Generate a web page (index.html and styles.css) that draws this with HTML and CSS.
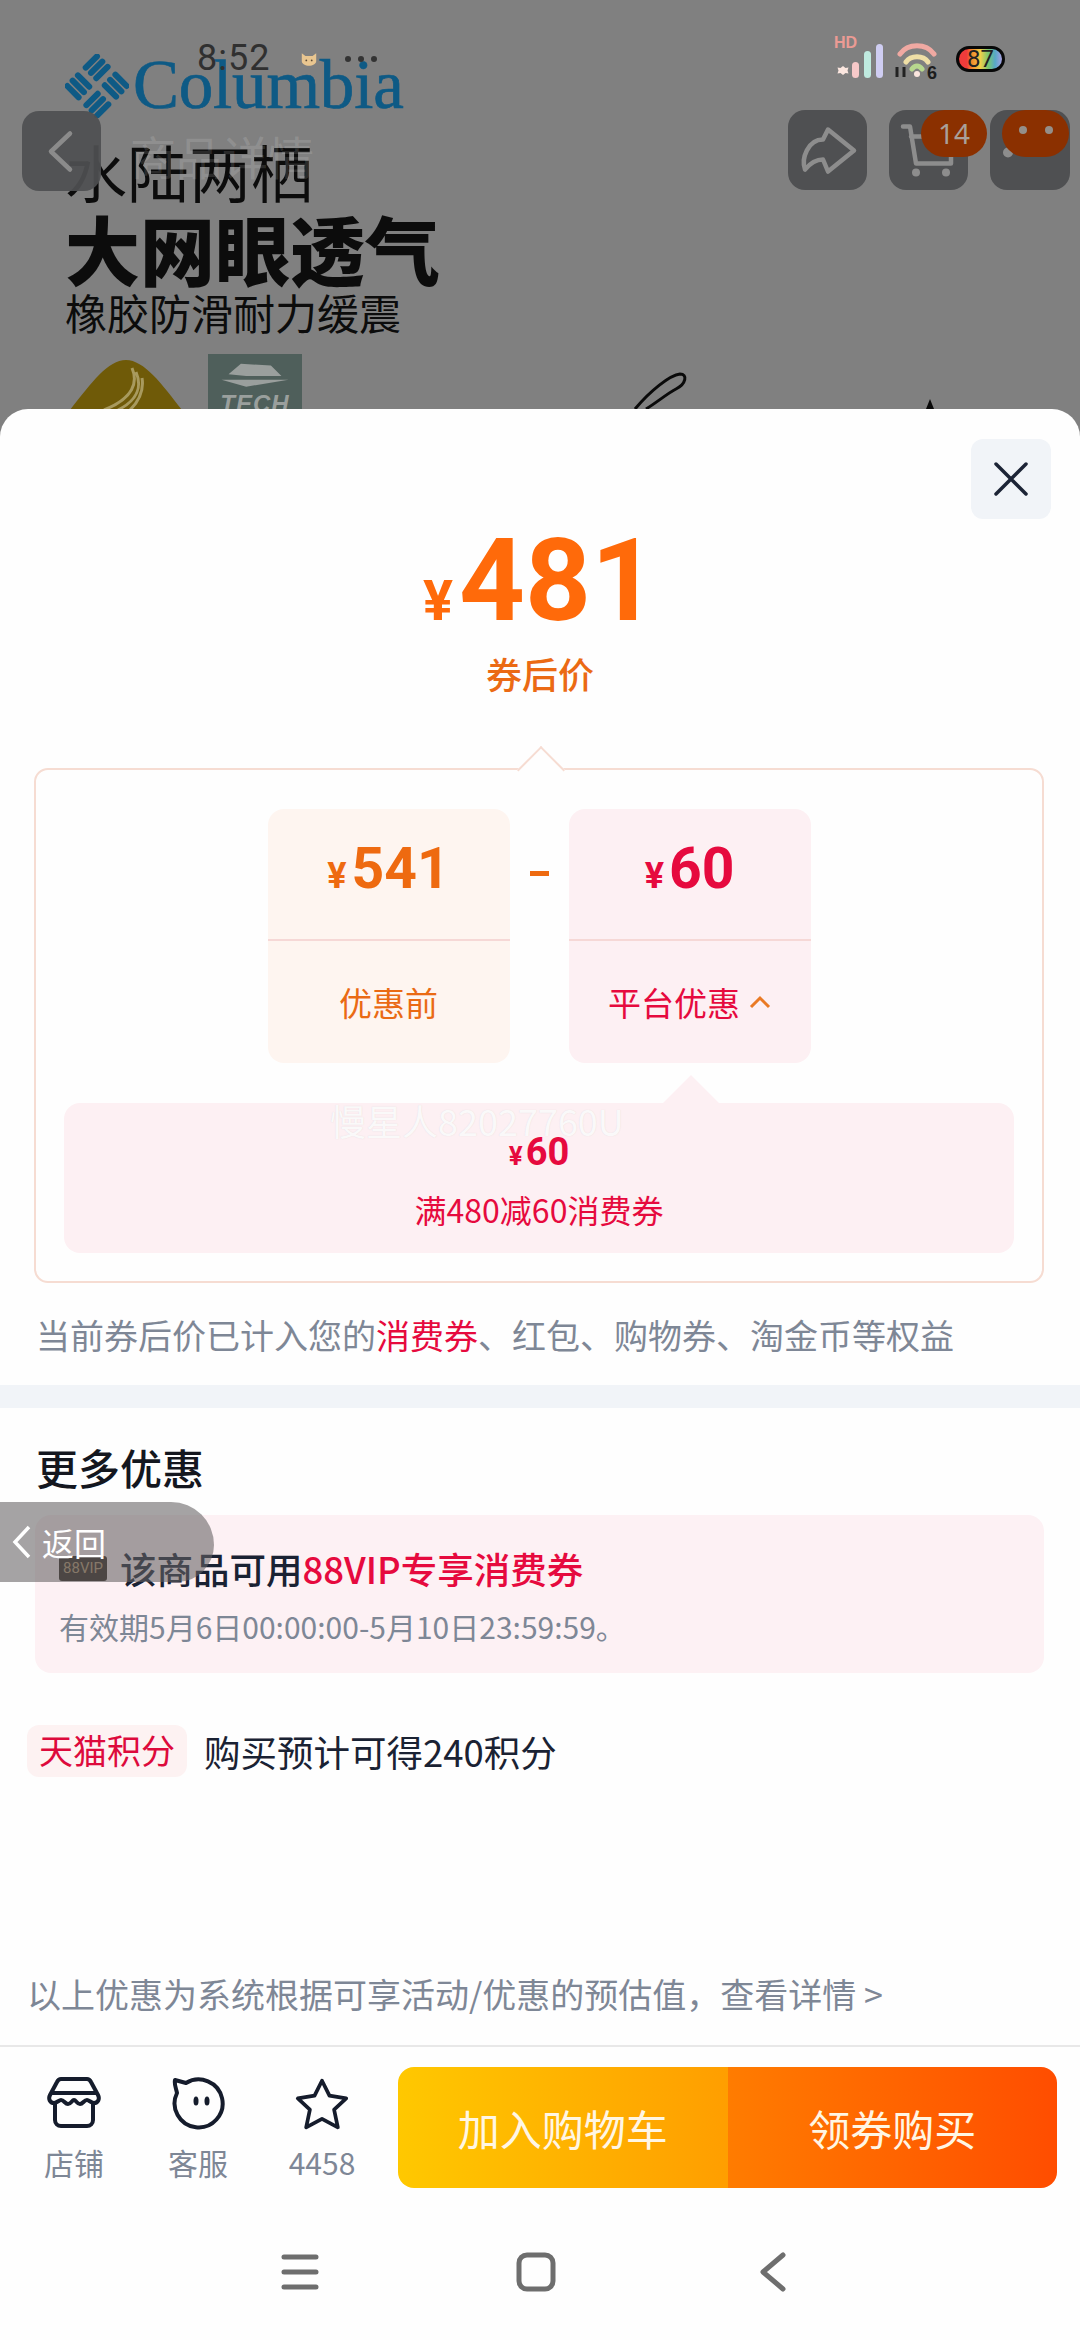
FILE: index.html
```html
<!DOCTYPE html>
<html lang="zh-CN">
<head>
<meta charset="utf-8">
<title>券后价</title>
<link rel="stylesheet" href="styles.css">
</head>
<body>
<div class="screen">
  <header class="hero">
    <div class="art">
      <div class="logo">
        <svg class="logo-mark" viewBox="0 0 64 64"><g transform="rotate(45 32 32)" fill="#0e5a85"><rect x="8" y="8" width="6" height="22" rx="3"/><rect x="15.500" y="8" width="6" height="22" rx="3"/><rect x="23" y="8" width="6" height="22" rx="3"/><rect x="34" y="8" width="22" height="6" rx="3"/><rect x="34" y="15.500" width="22" height="6" rx="3"/><rect x="34" y="23" width="22" height="6" rx="3"/><rect x="35" y="34" width="6" height="22" rx="3"/><rect x="42.500" y="34" width="6" height="22" rx="3"/><rect x="50" y="34" width="6" height="22" rx="3"/><rect x="8" y="35" width="22" height="6" rx="3"/><rect x="8" y="42.500" width="22" height="6" rx="3"/><rect x="8" y="50" width="22" height="6" rx="3"/></g></svg>
        <span class="logo-text">Columbia</span>
      </div>
      <div class="art-line1">水陆两栖</div>
      <div class="art-line2">大网眼透气</div>
      <div class="art-line3">橡胶防滑耐力缓震</div>
      <div class="art-badges">
        <svg class="badge-dome" viewBox="0 0 112 50"><path d="M0 50C22 22 38 0 56 0s36 24 56 50z" fill="#6f5a08"/><path d="M62 8c6 14 2 30-28 42M66 12c6 14 2 28-18 38M72 18c2 12-2 22-12 32" fill="none" stroke="#a89a5e" stroke-width="3"/></svg>
        <div class="badge-tech">
          <svg class="tech-leaf" viewBox="0 0 80 34"><path d="M10 14L24 2l34 2 12 12H30zM2 20h76L30 28z" fill="#9a9f9d"/></svg>
          <span class="tech-text">TECH</span>
        </div>
      </div>
    </div>
    <svg class="scribble" viewBox="0 0 320 40"><path d="M5 38C20 20 40 4 50 3c8 0 6 10-4 15-8 4-20 14-30 20" fill="none" stroke="#0a0a0a" stroke-width="3"/><path d="M296 38l4-10 4 10z" fill="#0a0a0a"/></svg>
    <div class="ghost-title">商品详情</div>

    <div class="status">
      <span class="clock">8:52</span>
      <svg class="cat" viewBox="0 0 20 16"><path d="M2 1l4 3h8l4-3v9c0 3-4 5-8 5s-8-2-8-5z" fill="#e9c690"/><circle cx="7" cy="9" r="1" fill="#5b4a36"/><circle cx="13" cy="9" r="1" fill="#5b4a36"/></svg>
      <span class="status-dots"><i></i><i></i><i></i></span>
      <svg class="status-icons" viewBox="0 0 180 50">
        <text x="4" y="18" class="hd-text">HD</text>
        <path d="M13 39l2.500 2 3-.5-1 3 1 3-3-.5-2.500 2-2.500-2-3 .5 1-3-1-3 3 .5z" transform="translate(0 -3)" fill="#fbe6df"/>
        <rect x="22" y="32" width="7" height="16" rx="3.500" fill="#f7c9c9"/>
        <rect x="34" y="21" width="7" height="27" rx="3.500" fill="#bfeadf"/>
        <rect x="46" y="14" width="7" height="34" rx="3.500" fill="#cfcdf2"/>
        <path d="M70 24C78 13 96 13 104 24" fill="none" stroke="#f0a9a2" stroke-width="5" stroke-linecap="round"/>
        <path d="M76 32C81 25 93 25 98 32" fill="none" stroke="#efdfa6" stroke-width="5" stroke-linecap="round"/>
        <path d="M82 39C85 35 89 35 92 39" fill="none" stroke="#b7d88e" stroke-width="5" stroke-linecap="round"/>
        <circle cx="87" cy="44" r="3" fill="#fbe6df"/>
        <path d="M67 37v10M74 37v10" stroke="#222" stroke-width="3"/>
        <text x="97" y="49" class="net-text">6</text>
      </svg>
      <div class="battery"><span>87</span></div>
    </div>

    <nav class="actions">
      <span class="act act-back"><svg viewBox="0 0 79 79"><path d="M48 22L29 40l19 18" class="act-line"/></svg></span>
      <span class="act act-share"><svg viewBox="0 0 79 79"><path d="M40 19L66 40 40 61 35 49C28 49 22 53 17 59 13 48 20 29 35 29z" class="act-line"/></svg></span>
      <span class="act act-cart"><svg viewBox="0 0 79 79"><path d="M14 16h7l6 37h35V40M22 26h24" class="act-line"/><circle cx="27" cy="62" r="4" class="act-fill"/><circle cx="57" cy="62" r="4" class="act-fill"/></svg><b class="pill pill-cart">14</b></span>
      <span class="act act-menu"><svg viewBox="0 0 80 79"><circle cx="18" cy="42" r="5" class="act-fill"/></svg><b class="pill pill-menu"><i></i><i></i></b></span>
    </nav>
  </header>

  <main class="sheet">
    <button class="close" aria-label="关闭"><svg viewBox="0 0 34 34"><path d="M2 2l30 30M32 2L2 32"/></svg></button>

    <div class="final-price"><span class="yen">¥</span>481</div>
    <div class="final-label">券后价</div>

    <section class="calc">
      <div class="cards">
        <div class="card card-orange">
          <div class="card-amount"><span class="card-yen">¥</span>541</div>
          <div class="card-name">优惠前</div>
        </div>
        <div class="minus-slot"><span class="minus"></span></div>
        <div class="card card-pink">
          <div class="card-amount"><span class="card-yen">¥</span>60</div>
          <div class="card-name">平台优惠<svg class="caret" viewBox="0 0 22 14"><path d="M2 12l9-9 9 9"/></svg></div>
        </div>
      </div>
      <div class="detail">
        <div class="detail-amount"><span class="detail-yen">¥</span>60</div>
        <div class="detail-name">满480减60消费券</div>
      </div>
    </section>

    <p class="note">当前券后价已计入您的<span class="red">消费券</span>、红包、购物券、淘金币等权益</p>
    <div class="band"></div>

    <h2 class="more-title">更多优惠</h2>
    <div class="coupon">
      <div class="coupon-title"><span class="vip-icon">88VIP</span>该商品可用<span class="red">88VIP专享消费券</span></div>
      <div class="coupon-date">有效期5月6日00:00:00-5月10日23:59:59。</div>
    </div>
    <div class="points"><span class="points-tag">天猫积分</span><span>购买预计可得240积分</span></div>
    <p class="disclaimer">以上优惠为系统根据可享活动/优惠的预估值，查看详情 &gt;</p>

    <footer class="bar">
      <div class="bar-item">
        <svg class="bar-icon" viewBox="0 0 54 54"><path d="M14 2h26c2 0 3 1 4 3l7 13c2 4 0 8-4 8-3 0-5-3-7-3-3 0-4 4-7 4s-4-4-6-4-3 4-6 4-4-4-7-4c-2 0-4 3-7 3-4 0-6-4-4-8l7-13c1-2 2-3 4-3zM5 16h44M8 27v16a6 6 0 0 0 6 6h26a6 6 0 0 0 6-6V27"/></svg>
        <span class="bar-label">店铺</span>
      </div>
      <div class="bar-item">
        <svg class="bar-icon" viewBox="0 0 54 54"><path d="M4 3l11 3a24 24 0 1 1-9 10C5 11 3 7 4 3z"/><ellipse cx="25" cy="24" rx="2.500" ry="4.500" class="bar-eye"/><ellipse cx="36" cy="24" rx="2.500" ry="4.500" class="bar-eye"/></svg>
        <span class="bar-label">客服</span>
      </div>
      <div class="bar-item">
        <svg class="bar-icon" viewBox="0 0 58 56"><path d="M29 3l8 16 18 3-13 12 4 19-17-9-17 9 4-19L3 22l18-3z"/></svg>
        <span class="bar-label">4458</span>
      </div>
      <div class="buy">
        <div class="buy-btn buy-cart">加入购物车</div>
        <div class="buy-btn buy-now">领券购买</div>
      </div>
    </footer>
    <div class="navkeys">
      <svg class="key" viewBox="0 0 40 40"><path d="M4 5h32M4 20h32M4 35h32" class="key-line"/></svg>
      <svg class="key" viewBox="0 0 40 40"><rect x="3" y="3" width="34" height="34" rx="8" class="key-line"/></svg>
      <svg class="key" viewBox="0 0 40 40"><path d="M31 3L11 20l20 17" class="key-line"/></svg>
    </div>
  </main>

  <div class="watermark">慢星人82027760U</div>
  <div class="float-back"><svg viewBox="0 0 20 34"><path d="M17 2L3 17l14 15"/></svg><span>返回</span></div>
</div>
</body>
</html>
```
FILE: styles.css
```css
* { box-sizing: border-box; }
html, body { margin: 0; padding: 0; }
body { font-family: "Noto Sans CJK SC", "Noto Sans", sans-serif; background: #fff; }
.screen { position: relative; width: 1080px; height: 2340px; overflow: hidden; display: flex; flex-direction: column; background: #808080; }

/* hero */
.hero { position: relative; height: 437px; flex: none; background: #808080; overflow: hidden; margin-bottom: -28px; }
.art { padding: 50px 0 0 65px; color: #0c0c0c; }
.logo { display: flex; align-items: flex-end; height: 70px; gap: 4px; }
.logo-mark { width: 64px; height: 64px; margin-bottom: 2px; }
.logo-text { font-family: "Liberation Serif", serif; font-size: 69px; line-height: 70px; color: #0e5a85; letter-spacing: -.2px; -webkit-text-stroke: .7px #0e5a85; }
.art-line1 { margin-top: 18px; font-size: 62px; line-height: 66px; }
.art-line2 { margin-top: 4px; font-size: 75px; line-height: 80px; font-weight: 900; }
.art-line3 { font-size: 42px; line-height: 48px; }
.art-badges { display: flex; margin-top: 18px; gap: 26px; padding-left: 5px; align-items: flex-start; }
.badge-dome { width: 112px; height: 50px; margin-top: 6px; }
.badge-tech { width: 94px; height: 60px; background: #4f5f5b; display: flex; flex-direction: column; align-items: center; padding-top: 8px; }
.tech-leaf { width: 72px; height: 30px; flex: none; }
.tech-text { font: italic 700 24px/24px "Liberation Sans", sans-serif; color: #9a9f9d; letter-spacing: 1px; }
.scribble { position: absolute; left: 630px; top: 371px; width: 320px; height: 40px; }
.ghost-title { position: absolute; left: 130px; top: 130px; font-size: 46px; line-height: 50px; color: rgba(255,255,255,.14); }

.status { position: absolute; inset: 0 0 auto 0; height: 90px; }
.clock { position: absolute; left: 197px; top: 36px; font: 400 36px/44px Roboto, sans-serif; color: #303030; letter-spacing: 1px; }
.cat { position: absolute; left: 300px; top: 52px; width: 18px; height: 15px; }
.status-dots { position: absolute; left: 345px; top: 56px; display: flex; gap: 7px; }
.status-dots i { width: 6px; height: 6px; border-radius: 50%; background: #333; }
.status-icons { position: absolute; left: 830px; top: 30px; width: 180px; height: 50px; }
.hd-text { font: 800 16px "Liberation Sans", sans-serif; fill: #eb9b94; }
.net-text { font: 700 18px "Liberation Sans", sans-serif; fill: #1d1d1d; }
.battery { position: absolute; left: 956px; top: 46px; width: 49px; height: 26px; border: 3px solid #080808; border-radius: 13px; background: linear-gradient(90deg, #ee3b3b 0 18%, #f28a2a 30%, #f0cf4a 50%, #79c66f 68%, #56a8c8 84%, #a9a0e0 100%); display: flex; align-items: center; justify-content: center; }
.battery span { font: 400 24px/20px Roboto, sans-serif; color: #222; }

.actions { position: absolute; inset: 0; }
.act { position: absolute; top: 110px; width: 79px; height: 80px; border-radius: 17px; background: #4f5052; }
.act svg { width: 100%; height: 100%; display: block; }
.act-back { left: 22px; top: 111px; opacity: .92; }
.act-share { left: 788px; }
.act-cart { left: 889px; }
.act-menu { left: 990px; width: 80px; }
.act-line { fill: none; stroke: #8d8d8d; stroke-width: 4.500; stroke-linecap: round; stroke-linejoin: round; }
.act-fill { fill: #8d8d8d; }
.pill { position: absolute; top: 0; height: 47px; border-radius: 24px; background: #8b3000; display: flex; align-items: center; justify-content: center; font: 400 28px/47px "Noto Sans", sans-serif; color: #a9a09a; }
.pill-cart { left: 32px; width: 66px; }
.pill-menu { left: 12px; width: 67px; gap: 18px; }
.pill-menu i { width: 8px; height: 8px; border-radius: 50%; background: #948f8a; margin-top: -8px; }

/* sheet */
.sheet { position: relative; flex: 1; display: flex; flex-direction: column; background: #fefefe; border-radius: 28px 28px 0 0; }
.close { position: absolute; top: 30px; right: 29px; width: 80px; height: 80px; border: 0; padding: 0; border-radius: 12px; background: #f1f4f8; display: flex; align-items: center; justify-content: center; }
.close svg { width: 34px; height: 34px; fill: none; stroke: #1c2436; stroke-width: 3.500; stroke-linecap: round; }

.final-price { margin-top: 112px; height: 120px; line-height: 120px; text-align: center; font-family: "Liberation Sans Narrow", Roboto, sans-serif; font-weight: 700; font-size: 115px; color: #ff6a0a; }
.yen { font-size: 56px; margin-right: 6px; }
.final-label { margin-top: 10px; height: 44px; line-height: 44px; text-align: center; font-size: 36px; font-weight: 500; color: #eb6a14; }

.calc { position: relative; margin: 73px 36px 0 34px; height: 515px; border: 2px solid #f6dcd2; border-radius: 14px; padding: 39px 28px 0; }
.calc::before { content: ""; position: absolute; left: 488px; top: -17px; width: 32px; height: 32px; transform: rotate(45deg); background: #fefefe; border: 2px solid #f6dcd2; border-width: 2px 0 0 2px; }
.cards { position: relative; display: flex; justify-content: center; margin-left: 0; }
.card { width: 242px; height: 254px; border-radius: 16px; display: flex; flex-direction: column; }
.card-orange { background: #fef5f0; color: #ea6a14; }
.card-pink { background: #fdf0f3; color: #e60a3e; }
.card-amount { height: 132px; border-bottom: 2px solid #f6d8d6; display: flex; align-items: baseline; justify-content: center; padding-top: 25px; font: 700 57px/70px "Liberation Sans Narrow", Roboto, sans-serif; }
.card-orange .card-amount { color: #ee6a10; }
.card-yen { font-size: 36px; margin-right: 5px; }
.card-name { flex: 1; display: flex; align-items: center; justify-content: center; font-size: 33px; line-height: 44px; padding-bottom: 0; }
.caret { width: 22px; height: 14px; margin-left: 9px; fill: none; stroke: #ea7a24; stroke-width: 3; }
.minus-slot { width: 59px; display: flex; justify-content: center; }
.minus { width: 19px; height: 5px; margin-top: 62px; background: #ee6a10; }
.detail { position: relative; margin-top: 40px; height: 150px; border-radius: 16px; background: #fdf0f3; color: #e60a3e; display: flex; flex-direction: column; align-items: center; }
.detail::before { content: ""; position: absolute; left: 599px; top: -28px; border: 28px solid transparent; border-top: 0; border-bottom-color: #fdf0f3; }
.detail-amount { margin-top: 28px; height: 42px; line-height: 42px; font: 700 38px/42px "Liberation Sans Narrow", Roboto, sans-serif; }
.detail-yen { font-size: 26px; margin-right: 3px; }
.detail-name { margin-top: 13px; font-size: 32px; line-height: 46px; }

.note { margin: 28px 0 0 36px; font-size: 34px; line-height: 48px; color: #7e8796; white-space: nowrap; }
.red { color: #e60a3e; }
.band { margin-top: 26px; height: 23px; flex: none; background: #f1f4f8; }
.more-title { margin: 31px 0 0 36px; font-size: 42px; line-height: 56px; font-weight: 500; color: #14171f; }
.coupon { margin: 20px 36px 0 35px; height: 158px; padding: 31px 0 0 24px; border-radius: 16px; background: #fdf1f4; }
.coupon-title { display: flex; align-items: center; height: 44px; font-size: 36.500px; font-weight: 500; color: #1a2233; white-space: nowrap; }
.vip-icon { width: 48px; height: 25px; margin-right: 13px; flex: none; border-radius: 3px; background: #2c231c; color: #b69a72; font: 400 15px/25px "Liberation Sans Narrow", Roboto, sans-serif; text-align: center; }
.coupon-date { margin-top: 16px; font-size: 30px; line-height: 40px; color: #7e8796; white-space: nowrap; }
.points { display: flex; align-items: center; margin: 52px 0 0 27px; height: 52px; gap: 17px; font-size: 36.500px; color: #1a2233; white-space: nowrap; }
.points-tag { height: 52px; padding: 0 12px; border-radius: 12px; background: #fdf2f2; font-size: 34px; line-height: 50px; color: #dd0a3c; }
.disclaimer { margin: 193px 0 0 27px; font-size: 34px; line-height: 48px; color: #7e8796; white-space: nowrap; }

.bar { margin-top: 27px; border-top: 2px solid #e8e8e8; display: flex; padding: 20px 23px 0 12px; height: 143px; flex: none; }
.bar-item { width: 124px; margin-top: 10px; display: flex; flex-direction: column; align-items: center; }
.bar-icon { width: 54px; height: 54px; fill: none; stroke: #151c2c; stroke-width: 4; stroke-linejoin: round; stroke-linecap: round; }
.bar-eye { fill: #151c2c; stroke: none; }
.bar-label { margin-top: 11px; font-size: 30px; line-height: 40px; color: #7e8796; }
.buy { flex: 1; margin-left: 14px; height: 121px; display: flex; border-radius: 16px; overflow: hidden; color: #fff6e4; font-size: 42px; }
.buy-btn { flex: 1; display: flex; align-items: center; justify-content: center; }
.buy-cart { background: linear-gradient(90deg, #ffc800, #ff9e00); }
.buy-now { background: linear-gradient(90deg, #ff7c00, #ff4d00); }
.navkeys { display: flex; gap: 196px; padding: 64px 0 0 280px; }
.key { width: 40px; height: 40px; }
.key-line { fill: none; stroke: #6e6e6e; stroke-width: 5; stroke-linecap: round; stroke-linejoin: round; }

/* overlays */
.watermark { position: absolute; left: 330px; top: 1097px; font-size: 36px; line-height: 46px; color: rgba(255,255,255,.85); white-space: nowrap; text-shadow: 0 0 1px rgba(180,180,180,.4); }
.float-back { position: absolute; left: 0; top: 1502px; width: 214px; height: 80px; border-radius: 0 44px 44px 0; border-bottom-right-radius: 38px; background: rgba(100,97,98,.58); display: flex; align-items: center; padding-left: 12px; color: #fff; font-size: 32px; line-height: 40px; }
.float-back svg { width: 20px; height: 34px; fill: none; stroke: #fff; stroke-width: 3.500; margin-right: 10px; }
```
